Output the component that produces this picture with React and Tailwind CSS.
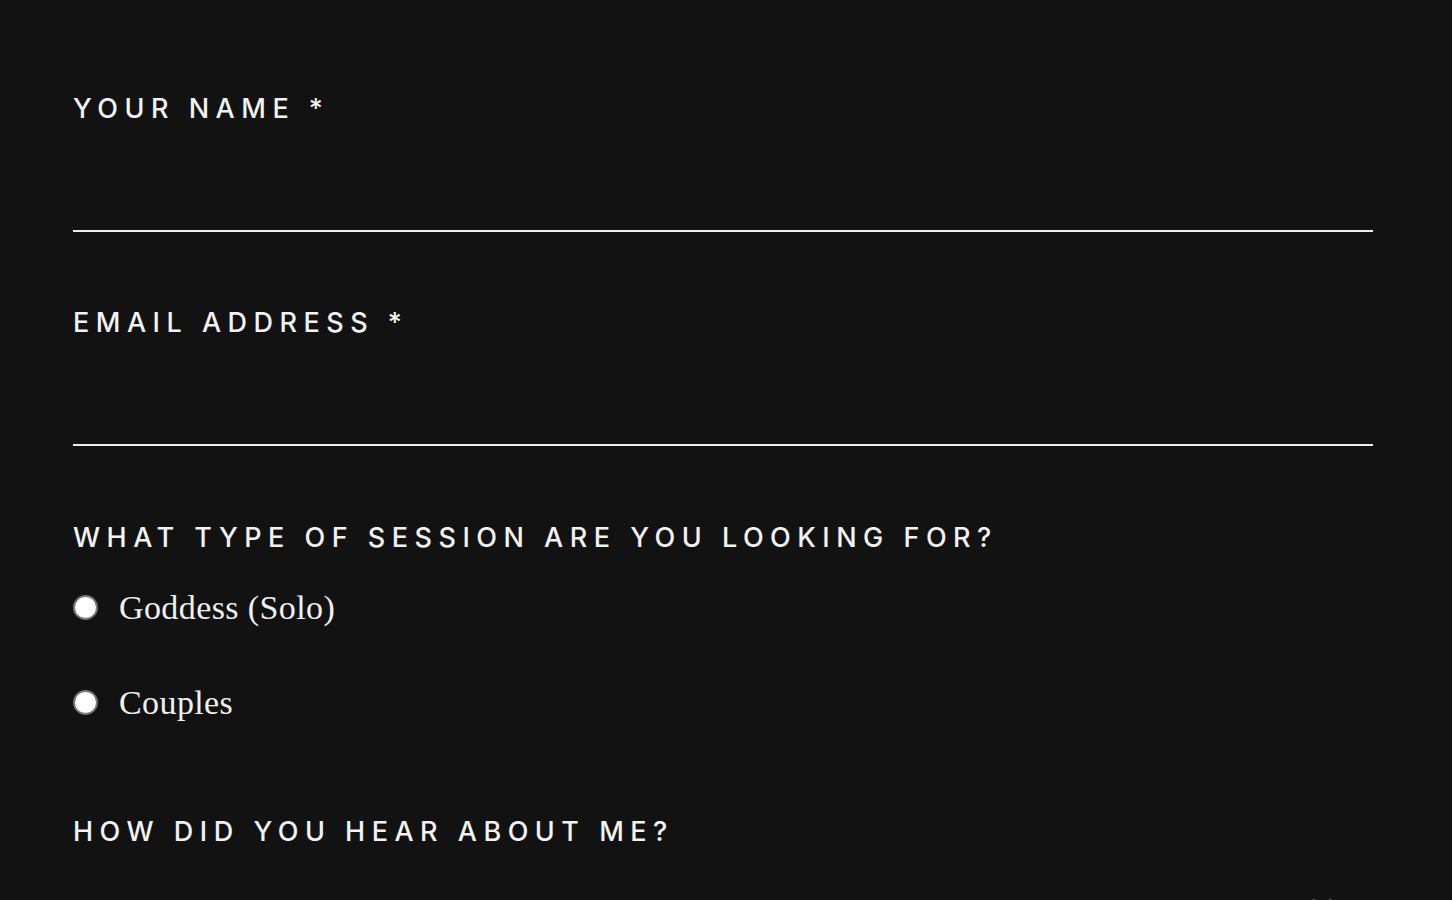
import React, { useState } from 'react';

const labelClass =
  "block text-[27px] leading-[27px] font-medium uppercase tracking-[6.5px] text-[#f2f2f2] [font-family:Inter,'Open_Sans',sans-serif]";

const TextField = ({ label, type = 'text' }) => (
  <div>
    <label className={labelClass}>{label}</label>
    <input
      type={type}
      className="mt-[50px] block h-[60px] w-full border-b-2 border-[#eeeeee] bg-transparent text-[24px] text-white outline-none"
    />
  </div>
);

const Radio = ({ name, value, checked, onChange }) => (
  <label className="flex h-[95px] cursor-pointer items-center">
    <span className="flex h-[25px] w-[25px] items-center justify-center rounded-full border-2 border-[#777777] bg-white">
      {checked && <span className="h-[11px] w-[11px] rounded-full bg-[#121212]" />}
    </span>
    <input type="radio" name={name} value={value} checked={checked} onChange={onChange} className="hidden" />
    <span className="ml-[21px] text-[34px] leading-[34px] tracking-[0.4px] text-[#f0f0f0] [font-family:'Liberation_Serif',serif]">
      {value}
    </span>
  </label>
);

export default function App() {
  const [session, setSession] = useState('');

  return (
    <div className="min-h-screen overflow-hidden bg-[#121212]">
      <form className="ml-[73px] w-[1300px] pt-[95px]">
        <TextField label="Your Name *" />

        <div className="mt-[77px]">
          <TextField label="Email Address *" type="email" />
        </div>

        {/* session type */}
        <div className="mt-[78px]">
          <span className={labelClass}>What type of session are you looking for?</span>
          <div className="mt-[9px]">
            {['Goddess (Solo)', 'Couples'].map(opt => (
              <Radio
                key={opt}
                name="session"
                value={opt}
                checked={session === opt}
                onChange={() => setSession(opt)}
              />
            ))}
          </div>
        </div>

        <div className="mt-[68px]">
          <span className={labelClass}>How did you hear about me?</span>
          <div className="mt-[53px] flex h-[60px] justify-end border-b-2 border-[#eeeeee] pr-[41px]">
            <svg width="20" height="12" viewBox="0 0 20 12" fill="none">
              <path d="M1 1l9 9 9-9" stroke="#555" strokeWidth="2" />
            </svg>
          </div>
        </div>
      </form>
    </div>
  );
}
